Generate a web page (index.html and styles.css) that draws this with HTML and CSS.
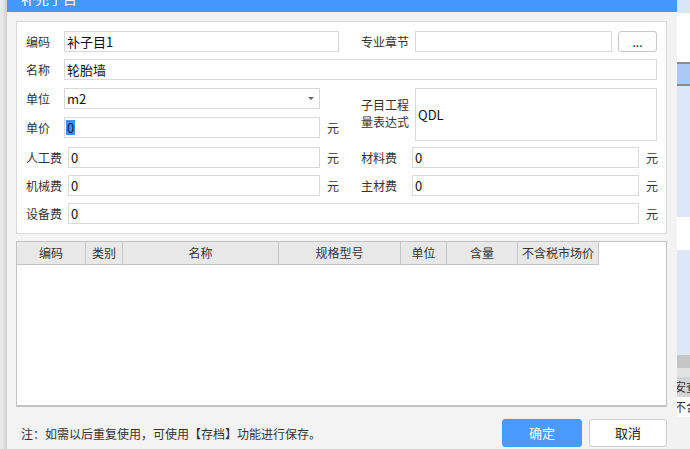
FILE: index.html
```html
<!DOCTYPE html>
<html lang="zh-CN">
<head>
<meta charset="utf-8">
<title>补充子目</title>
<link rel="stylesheet" href="styles.css">
</head>
<body>
<div class="screen">
  <div class="shade"></div>
  <div class="dialog">
    <div class="titlebar"><span class="title">补充子目</span></div>
    <div class="dbody">
      <div class="panel">
        <div class="row">
          <span class="lbl w38">编码</span>
          <div class="inp w275">补子目1</div>
          <span class="lbl w54 ml22">专业章节</span>
          <div class="inp w197"></div>
          <div class="btn-dots">...</div>
        </div>
        <div class="row mt7">
          <span class="lbl w38">名称</span>
          <div class="inp w593">轮胎墙</div>
        </div>
        <div class="block">
          <div class="bleft">
            <div class="row">
              <span class="lbl w38">单位</span>
              <div class="inp sel w256"><span>m2</span><span class="caret"></span></div>
            </div>
            <div class="row mt8">
              <span class="lbl w38">单价</span>
              <div class="inp w256"><span class="selected">0</span></div>
              <span class="unit">元</span>
            </div>
          </div>
          <div class="bright">
            <span class="lbl w54 expr-lbl">子目工程<br>量表达式</span>
            <div class="inp area w242">QDL</div>
          </div>
        </div>
        <div class="row mt6">
          <span class="lbl w42">人工费</span>
          <div class="inp w252">0</div>
          <span class="unit">元</span>
          <span class="lbl w51 ml22">材料费</span>
          <div class="inp w227">0</div>
          <span class="unit">元</span>
        </div>
        <div class="row mt7">
          <span class="lbl w42">机械费</span>
          <div class="inp w252">0</div>
          <span class="unit">元</span>
          <span class="lbl w51 ml22">主材费</span>
          <div class="inp w227">0</div>
          <span class="unit">元</span>
        </div>
        <div class="row mt7">
          <span class="lbl w42">设备费</span>
          <div class="inp w571">0</div>
          <span class="unit">元</span>
        </div>
      </div>
      <div class="grid">
        <div class="ghead">
          <div class="hc c1">编码</div>
          <div class="hc c2">类别</div>
          <div class="hc c3">名称</div>
          <div class="hc c4">规格型号</div>
          <div class="hc c5">单位</div>
          <div class="hc c6">含量</div>
          <div class="hc c7">不含税市场价</div>
        </div>
      </div>
      <div class="footer">
        <span class="note">注：如需以后重复使用，可使用【存档】功能进行保存。</span>
        <div class="btns">
          <div class="btn primary">确定</div>
          <div class="btn">取消</div>
        </div>
      </div>
    </div>
  </div>
  <div class="outside">
    <div class="s s1"></div>
    <div class="s s2"></div>
    <div class="s s3"></div>
    <div class="s s4"></div>
    <div class="s s3"></div>
    <div class="s s5"></div>
    <div class="s s6"></div>
    <div class="s s5b"></div>
    <div class="s s7"></div>
    <div class="s s8"></div>
    <div class="s s9"><span>安查</span></div>
    <div class="s s10"><span>不合</span></div>
    <div class="s s11"></div>
  </div>
</div>
</body>
</html>
```

FILE: styles.css
```css
html, body {
  margin: 0;
  padding: 0;
}
body {
  width: 690px;
  height: 449px;
  overflow: hidden;
  font-family: "Noto Sans CJK SC", "Microsoft YaHei", sans-serif;
  font-size: 12px;
  color: #333;
  background: #f3f3f3;
}
.screen {
  display: flex;
  height: 449px;
}
.shade {
  width: 7px;
  flex: none;
  background: linear-gradient(to right, #ececec, #e2e2e2 55%, #cbcbcb);
}
.dialog {
  width: 670px;
  flex: none;
  background: #f3f3f3;
  display: flex;
  flex-direction: column;
}
.titlebar {
  height: 12px;
  background: #4497fc;
  overflow: hidden;
  padding-left: 14px;
}
.title {
  display: block;
  color: #fff;
  font-size: 14px;
  line-height: 20px;
  margin-top: -12px;
}
.dbody {
  padding: 9px 10px 0 9px;
}
.panel {
  background: #fff;
  border: 1px solid #dadada;
  padding: 9px 8px 9px 9px;
}
.row {
  display: flex;
  align-items: center;
  height: 21px;
}
.mt6 { margin-top: 6px; }
.mt7 { margin-top: 7px; }
.mt8 { margin-top: 8px; }
.ml22 { margin-left: 22px; }
.lbl {
  flex: none;
  font-size: 12px;
  line-height: 17px;
  color: #333;
  white-space: nowrap;
}
.w38 { width: 38px; }
.w42 { width: 42px; }
.w51 { width: 51px; }
.w54 { width: 54px; }
.inp {
  flex: none;
  height: 21px;
  box-sizing: border-box;
  border: 1px solid #d9d9d9;
  background: #fff;
  padding: 0 2px;
  font-size: 13px;
  line-height: 19px;
  color: #111;
  white-space: nowrap;
  overflow: hidden;
}
.w197 { width: 197px; }
.w227 { width: 227px; }
.w242 { width: 242px; }
.w252 { width: 252px; }
.w256 { width: 256px; }
.w275 { width: 275px; }
.w571 { width: 571px; }
.w593 { width: 593px; }
.sel {
  display: flex;
  align-items: center;
  justify-content: space-between;
  padding-right: 5px;
}
.caret {
  width: 0;
  height: 0;
  border-left: 3px solid transparent;
  border-right: 3px solid transparent;
  border-top: 3px solid #666;
}
.selected {
  background: #3b8ff5;
  color: #14204a;
  display: inline-block;
  line-height: 15px;
  padding: 0 1px;
  margin-left: -1px;
}
.unit {
  flex: none;
  width: 12px;
  margin-left: 7px;
  font-size: 12px;
  color: #333;
}
.btn-dots {
  flex: none;
  width: 39px;
  height: 21px;
  box-sizing: border-box;
  margin-left: 6px;
  border: 1px solid #c8c8c8;
  border-radius: 3px;
  background: #fdfdfd;
  text-align: center;
  font-size: 12px;
  line-height: 19px;
  color: #222;
}
.block {
  display: flex;
  margin-top: 8px;
  height: 53px;
}
.bleft {
  width: 313px;
  flex: none;
}
.bright {
  display: flex;
  margin-left: 22px;
}
.expr-lbl {
  padding-top: 8px;
}
.area {
  height: 53px;
  display: flex;
  align-items: center;
}
.grid {
  margin-top: 7px;
  height: 166px;
  box-sizing: border-box;
  border: 1px solid #c3c3c3;
  border-bottom-width: 2px;
  background: #fff;
}
.ghead {
  display: flex;
}
.hc {
  flex: none;
  height: 23px;
  box-sizing: border-box;
  background: #e8e8e8;
  border-right: 1px solid #c6c6c6;
  border-bottom: 1px solid #c3c3c3;
  text-align: center;
  font-size: 12px;
  line-height: 22px;
  color: #333;
  white-space: nowrap;
}
.c1 { width: 69px; }
.c2 { width: 37px; }
.c3 { width: 156px; }
.c4 { width: 122px; }
.c5 { width: 46px; }
.c6 { width: 71px; }
.c7 { width: 81px; }
.footer {
  display: flex;
  align-items: center;
  justify-content: space-between;
  margin-top: 12px;
  padding-left: 5px;
  height: 28px;
}
.note {
  font-size: 12px;
  color: #333;
}
.btns {
  display: flex;
  gap: 7px;
}
.btn {
  width: 78px;
  height: 28px;
  box-sizing: border-box;
  border: 1px solid #cfcfcf;
  border-radius: 3px;
  background: #fff;
  text-align: center;
  font-size: 13px;
  line-height: 26px;
  color: #222;
}
.btn.primary {
  width: 80px;
  background: #4a9bff;
  border-color: #4a9bff;
  color: #fff;
}
.outside {
  width: 13px;
  flex: none;
  display: flex;
  flex-direction: column;
  overflow: hidden;
  box-shadow: inset 3px 0 3px -1px rgba(0, 0, 0, 0.18);
  background: #f0f0f0;
}
.s { flex: none; overflow: hidden; white-space: nowrap; }
.s1 { height: 13px; background: #d9e6f8; }
.s2 { height: 49px; background: #fff; }
.s3 { height: 2px; background: #8c8c8c; }
.s4 { height: 20px; background: #a8caf5; }
.s5 { height: 131px; background: #dce8f8; }
.s6 { height: 33px; background: #fff; }
.s5b { height: 105px; background: #dce8f8; }
.s7 { height: 13px; background: #c6c6c6; }
.s8 { height: 9px; background: #e2e2e2; }
.s9 { height: 20px; background: #d4d4d4; line-height: 20px; }
.s10 { height: 20px; background: #fff; line-height: 20px; }
.s11 { height: 32px; background: #f2f2f2; }
.s9 span, .s10 span {
  display: block;
  margin-left: -3px;
  font-size: 12px;
  color: #333;
}
```
